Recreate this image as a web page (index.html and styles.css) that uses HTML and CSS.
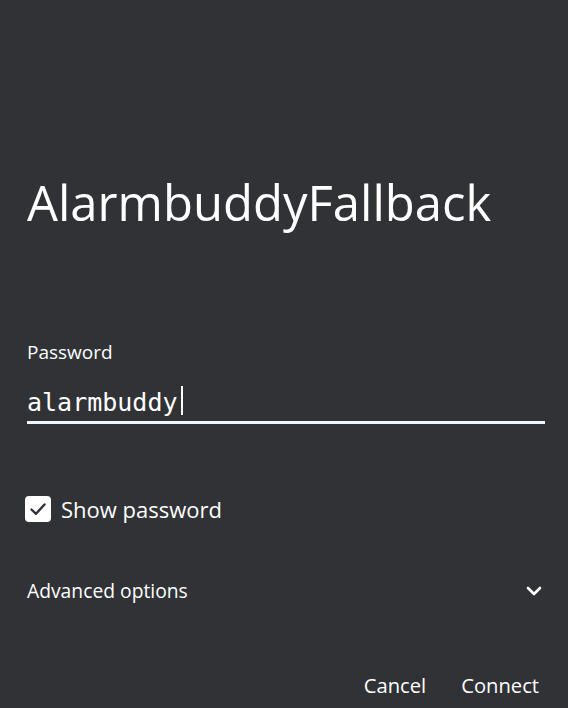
FILE: index.html
```html
<!DOCTYPE html>
<html>
<head>
<meta charset="utf-8">
<link rel="stylesheet" href="styles.css">
</head>
<body>
<div class="dialog">
  <h1 class="title">AlarmbuddyFallback</h1>
  <div class="field">
    <label class="label">Password</label>
    <div class="input"><span class="value">alarmbuddy</span><span class="caret"></span></div>
  </div>
  <div class="check-row">
    <span class="checkbox"><svg width="20" height="20" viewBox="0 0 20 20"><path d="M3.5 10.5 L8 14.8 L16.5 5.5" fill="none" stroke="#2f3236" stroke-width="2.4" stroke-linecap="round" stroke-linejoin="round"/></svg></span>
    <span class="check-label">Show password</span>
  </div>
  <div class="advanced">
    <span>Advanced options</span>
    <svg class="chev" width="16" height="10" viewBox="0 0 16 10"><path d="M2 2 L8 8 L14 2" fill="none" stroke="#fff" stroke-width="2.6" stroke-linecap="round" stroke-linejoin="round"/></svg>
  </div>
  <div class="actions">
    <span class="btn">Cancel</span>
    <span class="btn">Connect</span>
  </div>
</div>
</body>
</html>
```
FILE: styles.css
```css
html, body {
  margin: 0;
  padding: 0;
  background: #303236;
}
body {
  width: 568px;
  height: 708px;
  overflow: hidden;
  font-family: "Open Sans", "Liberation Sans", sans-serif;
  color: #ffffff;
}
.dialog {
  padding: 0 23px 0 27px;
  display: flex;
  flex-direction: column;
}
.title {
  margin: 168px 0 0 0;
  font-family: "Open Sans", sans-serif;
  font-weight: 400;
  font-size: 49px;
  line-height: 68px;
  letter-spacing: 0;
}
.field {
  margin-top: 103px;
  display: flex;
  flex-direction: column;
}
.label {
  font-size: 19px;
  line-height: 26px;
}
.input {
  margin-top: 13px;
  height: 46px;
  border-bottom: 3px solid #eef6fb;
  display: flex;
  align-items: flex-start;
  padding-top: 0;
  box-sizing: border-box;
}
.value {
  font-family: "DejaVu Sans Mono", monospace;
  font-size: 25px;
  line-height: 30px;
  margin-top: 10px;
}
.caret {
  width: 2px;
  height: 29px;
  background: #ffffff;
  margin-left: 3px;
  margin-top: 8px;
}
.check-row {
  margin-top: 70px;
  display: flex;
  align-items: center;
  margin-left: -2px;
}
.checkbox {
  width: 26px;
  height: 26px;
  border-radius: 4px;
  background: #ffffff;
  display: flex;
  align-items: center;
  justify-content: center;
}
.check-label {
  margin-left: 10px;
  font-size: 22px;
}
.advanced {
  margin-top: 53px;
  display: flex;
  align-items: center;
  justify-content: space-between;
  font-size: 19.3px;
}
.chev {
  margin-right: 3px;
}
.actions {
  margin-top: 67px;
  margin-right: 6px;
  display: flex;
  justify-content: flex-end;
  gap: 35px;
  font-size: 20.2px;
}
.btn {
  font-weight: 500;
}
```
